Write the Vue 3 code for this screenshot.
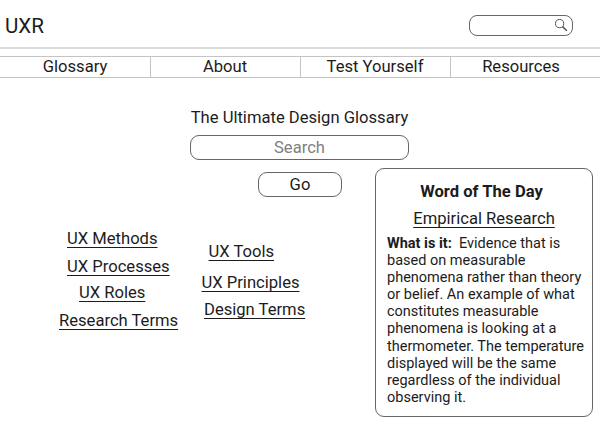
<script setup>
const navItems = ['Glossary', 'About', 'Test Yourself', 'Resources']
</script>

<template>
  <div class="page">
    <header class="top">
      <div class="logo">UXR</div>
      <div class="mini-search">
        <svg width="14" height="14" viewBox="0 0 14 14" fill="none" stroke="#555">
          <circle cx="5.6" cy="5.6" r="4.1" stroke-width="1" />
          <path d="M8.6 8.6 L12.8 12.8" stroke-width="1.6" />
        </svg>
      </div>
    </header>

    <nav class="nav">
      <a v-for="item in navItems" :key="item" class="nav-item">{{ item }}</a>
    </nav>

    <main class="main">
      <section class="hero">
        <h1 class="hero-title">The Ultimate Design Glossary</h1>
        <div class="search">Search</div>
      </section>

      <div class="left">
        <button class="go">Go</button>
        <div class="links">
          <div class="col col-a">
            <a class="link m-methods">UX Methods</a>
            <a class="link m-processes">UX Processes</a>
            <a class="link m-roles">UX Roles</a>
            <a class="link m-research">Research Terms</a>
          </div>
          <div class="col col-b">
            <a class="link m-tools">UX Tools</a>
            <a class="link m-principles">UX Principles</a>
            <a class="link m-design">Design Terms</a>
          </div>
        </div>
      </div>

      <aside class="card">
        <h2 class="card-title">Word of The Day</h2>
        <a class="card-word">Empirical Research</a>
        <p class="card-text">
          <b>What is it:</b>&nbsp; Evidence that is based on measurable phenomena rather than theory or belief. An example of what constitutes measurable phenomena is looking at a thermometer. The temperature displayed will be the same regardless of the individual observing it.
        </p>
      </aside>
    </main>
  </div>
</template>

<style scoped>
.page {
  width: 600px;
  height: 427px;
  overflow: hidden;
  background: #fff;
  color: #1c1c1c;
  font-family: Roboto, sans-serif;
}

.top {
  height: 49px;
  box-sizing: border-box;
  display: flex;
  align-items: center;
  justify-content: space-between;
  padding: 4px 27px 0 5px;
  border-bottom: 2px solid #dcdcdc;
}

.logo {
  font-size: 20.6px;
}

.mini-search {
  width: 104px;
  height: 21px;
  margin-top: -1px;
  box-sizing: border-box;
  border: 1px solid #666;
  border-radius: 8px;
  display: flex;
  align-items: center;
  justify-content: flex-end;
  padding-right: 4px;
}

.nav {
  margin-top: 7px;
  height: 22px;
  box-sizing: border-box;
  display: flex;
  border-top: 1px solid #c4c4c4;
  border-bottom: 1px solid #c4c4c4;
}

.nav-item {
  width: 150px;
  box-sizing: border-box;
  border-left: 1px solid #c4c4c4;
  padding-right: 1px;
  text-align: center;
  font-size: 16.6px;
  line-height: 19px;
}

.nav-item:first-child {
  border-left: none;
  padding-right: 0;
}

.nav-item:last-child {
  padding-right: 9px;
}

.main {
  display: grid;
  grid-template-columns: 375px 218px;
  grid-template-rows: 60px auto;
  padding-top: 30px;
}

.hero {
  grid-column: 1 / 3;
  padding-left: 190px;
  width: 219px;
}

.hero-title {
  margin: 0;
  font-size: 16.6px;
  font-weight: 400;
  line-height: 19px;
  text-align: center;
  white-space: nowrap;
}

.search {
  margin-top: 8px;
  height: 25px;
  box-sizing: border-box;
  border: 1px solid #666;
  border-radius: 9px;
  text-align: center;
  color: #808080;
  font-size: 16.6px;
  line-height: 23px;
}

.left {
  display: flex;
  flex-direction: column;
}

.go {
  margin: 4px 0 0 258px;
  width: 84px;
  height: 25px;
  box-sizing: border-box;
  border: 1px solid #666;
  border-radius: 9px;
  background: #fff;
  color: #1c1c1c;
  font-family: inherit;
  font-size: 16.6px;
  padding: 0;
}

.links {
  display: flex;
}

.col {
  display: flex;
  flex-direction: column;
  align-items: flex-start;
}

.col-a {
  width: 190px;
}

.link {
  font-size: 16.6px;
  line-height: 20px;
  text-decoration: underline;
  text-underline-offset: 3px;
  text-decoration-thickness: 1px;
  white-space: nowrap;
}

.m-methods { margin: 32px 0 0 67px; }
.m-processes { margin: 8px 0 0 67px; }
.m-roles { margin: 6px 0 0 79px; }
.m-research { margin: 8px 0 0 59px; }
.m-tools { margin: 45px 0 0 18.5px; }
.m-principles { margin: 11px 0 0 11.5px; }
.m-design { margin: 7px 0 0 14px; }

.card {
  width: 218px;
  height: 249px;
  box-sizing: border-box;
  border: 1px solid #666;
  border-radius: 9px;
  padding: 13px 6px 0 11px;
}

.card-title {
  margin: 0;
  padding-right: 10px;
  font-size: 16.6px;
  font-weight: 700;
  line-height: 19px;
  text-align: center;
}

.card-word {
  display: block;
  margin-top: 8px;
  padding-right: 5px;
  font-size: 16.6px;
  line-height: 19px;
  text-align: center;
  text-decoration: underline;
  text-underline-offset: 3px;
  text-decoration-thickness: 1px;
}

.card-text {
  margin: 7px 0 0;
  font-size: 14.5px;
  line-height: 17.1px;
}
</style>
